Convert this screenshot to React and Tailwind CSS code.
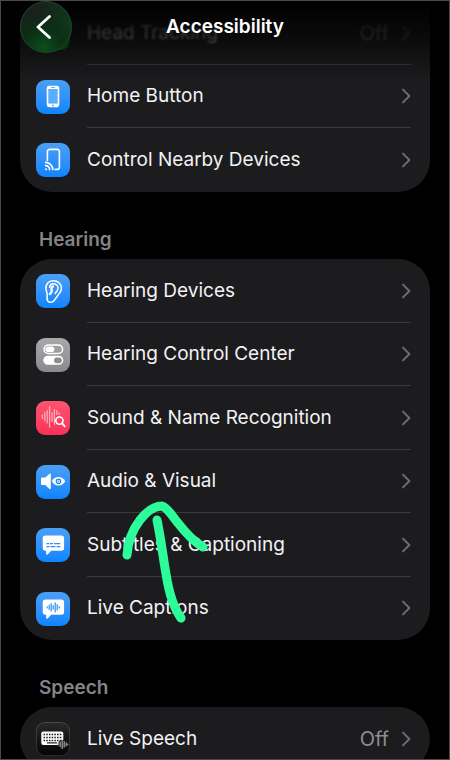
import React from 'react';

const HomeButtonIcon = () => (
  <svg viewBox="0 0 34 34" className="w-full h-full" aria-hidden="true">
    <rect x="10.7" y="5.8" width="12.6" height="21.4" rx="2.4" fill="#fff" />
    <rect x="12.3" y="9" width="9.4" height="14.6" fill="#5aaefb" />
    <rect x="15" y="7" width="4" height="1" rx="0.5" fill="#5aaefb" />
    <circle cx="17" cy="25.4" r="1" fill="#5aaefb" />
  </svg>
);

const NearbyIcon = () => (
  <svg viewBox="0 0 34 34" className="w-full h-full" fill="none" stroke="#fff" strokeWidth="1.6" strokeLinecap="round" aria-hidden="true">
    <path d="M11.4 17.5V8.6a2.2 2.2 0 0 1 2.2-2.2h7.6a2.2 2.2 0 0 1 2.2 2.2v15.6a2.2 2.2 0 0 1-2.2 2.2h-2" />
    <path d="M9.6 19.4a7.4 7.4 0 0 1 7.2 7.2M9.6 22.6a4 4 0 0 1 4 4" />
    <circle cx="10" cy="26.2" r="1" fill="#fff" stroke="none" />
  </svg>
);

const EarIcon = () => (
  <svg viewBox="0 0 34 34" className="w-full h-full" fill="none" stroke="#fff" strokeLinecap="round" strokeLinejoin="round" aria-hidden="true">
    <path strokeWidth="1.5" d="M10 15.5C9.4 10 12.6 6.8 17.2 6.8c4.9 0 8.2 3.2 8.2 7.4 0 3-1.6 4.8-3.6 7.2-1.7 2-2.2 3.5-3.8 5.3-1.5 1.6-4.2 2-5.9.6-1.5-1.3-1.2-3.1-.9-5.1.4-2.5-.6-4-1.2-6.7z" />
    <path strokeWidth="1.5" d="M13.6 13.2c.2-2.200 1.800-3.400 3.700-3.400 2.800 0 4.800 1.800 4.800 4.300 0 2.200-1.400 3.800-2.900 5.300" />
    <path strokeWidth="2.4" d="M17 12.400c-1.600.5-1.700 2-1.400 3.400.4 2-.2 3.100-1.700 4.200" />
  </svg>
);

const TogglesIcon = () => (
  <svg viewBox="0 0 34 34" className="w-full h-full" aria-hidden="true">
    <rect x="8" y="7" width="18.6" height="8.6" rx="4.3" fill="none" stroke="#fff" strokeWidth="1.5" />
    <rect x="9.4" y="8.5" width="9" height="5.6" rx="2.8" fill="#fff" />
    <rect x="7.3" y="17.8" width="20" height="9" rx="4.5" fill="#fff" />
    <rect x="18" y="19.4" width="7.8" height="5.8" rx="2.9" fill="#8d8d8f" />
  </svg>
);

const SoundIcon = () => (
  <svg viewBox="0 0 34 34" className="w-full h-full" fill="none" strokeLinecap="round" aria-hidden="true">
    <path stroke="#ffb3c1" strokeWidth="1.2" d="M6.4 14v3.6M8.8 11.5v8.5M11.2 9.5v12.5M13.6 5.8v20.4M16 11.5v9M18.4 8.5v15M20.8 9.5v4M23.2 12v1.5" />
    <circle cx="23.4" cy="19.6" r="3.6" stroke="#fff" strokeWidth="1.6" />
    <path stroke="#fff" strokeWidth="1.9" d="M26.2 22.4l2.6 3" />
  </svg>
);

const AudioVisualIcon = () => (
  <svg viewBox="0 0 34 34" className="w-full h-full" aria-hidden="true">
    <path fill="#fff" d="M6 12.5h3.3l4.2-3.8c.6-.5 1.3-.2 1.3.6v14c0 .8-.7 1.1-1.3.6l-4.2-3.8H6a1 1 0 0 1-1-1v-5.6a1 1 0 0 1 1-1z" />
    <path fill="#fff" d="M15.8 16.3c1.5-2.8 3.9-4.2 6.7-4.2s5.2 1.4 6.7 4.2c-1.5 2.8-3.9 4.2-6.7 4.2s-5.2-1.4-6.700-4.200z" />
    <circle cx="22.5" cy="16.3" r="2.2" fill="#fff" stroke="#1688f6" strokeWidth="1.2" />
    <circle cx="22.5" cy="16.3" r="0.8" fill="#1688f6" />
  </svg>
);

const bubblePath = 'M9.4 7.6h16a2.7 2.7 0 0 1 2.7 2.7v9.8a2.7 2.7 0 0 1-2.7 2.7H15.2l-3.6 3.7c-.6.6-1.4.3-1.4-.5v-3.2h-.8a2.7 2.7 0 0 1-2.7-2.7v-9.8a2.7 2.7 0 0 1 2.7-2.7z';

const SubtitlesIcon = () => (
  <svg viewBox="0 0 34 34" className="w-full h-full" aria-hidden="true">
    <path fill="#fff" d={bubblePath} />
    <path stroke="#2b8ff5" strokeWidth="1.2" d="M10.5 15.7h2.5M13.8 15.7h3.5M18.2 15.7h6M10.5 18.6h3M14.5 18.6h5M20.5 18.6h3.7" />
  </svg>
);

const LiveCaptionsIcon = () => (
  <svg viewBox="0 0 34 34" className="w-full h-full" aria-hidden="true">
    <path fill="#fff" d={bubblePath} />
    <path stroke="#2b8ff5" strokeWidth="1.2" strokeLinecap="round" d="M11.2 14.8v1M13.2 13v4.5M15.2 11.5v7.5M17.2 13.5v3.5M19.2 10.8v9M21.2 12.5v5.5M23.2 14.5v1.5" />
  </svg>
);

const LiveSpeechIcon = () => (
  <svg viewBox="0 0 34 34" className="w-full h-full" aria-hidden="true">
    <rect x="5.3" y="9.5" width="22" height="13.5" rx="2" fill="#fff" />
    <path stroke="#222" strokeWidth="1.5" strokeDasharray="1.6 1.1" d="M7.5 12.6h18M7.5 15.6h18M7.5 18.4h18" />
    <path stroke="#222" strokeWidth="1.2" d="M11 20.9h10" />
    <circle cx="26.5" cy="22.3" r="4.4" fill="#111" />
    <path stroke="#a5a5a7" strokeWidth="1.2" strokeLinecap="round" d="M22.2 21.5v1.5M24.2 20v4.5M26.2 18v8.5M28.2 19.5v5.5M30.2 20.8v3M31.8 22v.6" />
  </svg>
);

const ChevronRight = () => (
  <svg viewBox="0 0 10 16" className="w-[10px] h-4 shrink-0" fill="none" stroke="#6c6c70" strokeWidth="2" strokeLinecap="round" strokeLinejoin="round" aria-hidden="true">
    <path d="M2 1.600l6.400 6.400L2 14.400" />
  </svg>
);

const BLUE = 'bg-linear-to-b from-[#4a9ff5] to-[#0a84ff]';

const sections = [
  {
    items: [
      { label: 'Head Tracking', value: 'Off', tile: 'bg-[#0d6a20]', faded: true },
      { label: 'Home Button', tile: BLUE, Icon: HomeButtonIcon },
      { label: 'Control Nearby Devices', tile: BLUE, Icon: NearbyIcon },
    ],
  },
  {
    title: 'Hearing',
    items: [
      { label: 'Hearing Devices', tile: BLUE, Icon: EarIcon },
      { label: 'Hearing Control Center', tile: 'bg-linear-to-b from-[#a9a9ab] to-[#8a8a8c]', Icon: TogglesIcon },
      { label: 'Sound & Name Recognition', tile: 'bg-linear-to-b from-[#fb5570] to-[#fb2f58]', Icon: SoundIcon },
      { label: 'Audio & Visual', tile: BLUE, Icon: AudioVisualIcon },
      { label: 'Subtitles & Captioning', tile: BLUE, Icon: SubtitlesIcon },
      { label: 'Live Captions', tile: BLUE, Icon: LiveCaptionsIcon },
    ],
  },
  {
    title: 'Speech',
    items: [
      { label: 'Live Speech', value: 'Off', tile: 'bg-linear-to-b from-[#2a2a2b] to-[#050505] ring-1 ring-inset ring-white/15', Icon: LiveSpeechIcon },
    ],
  },
];

const SettingsRow = ({ label, value, tile, Icon, faded }) => (
  <li className="group odd:h-16 even:h-[63px]">
    <button type="button" className="flex w-full h-full items-center pl-4 text-left">
      <span className={`w-[34px] h-[34px] shrink-0 rounded-[9px] overflow-hidden ${tile}`}>{Icon && <Icon />}</span>
      <span className="ml-[17px] mr-[19px] flex flex-1 h-full items-center border-b border-[#3a3a3c] group-last:border-transparent">
        <span className={`flex flex-1 items-center ${faded ? 'blur-[1px] opacity-60' : ''}`}>
          <span className="flex-1 whitespace-nowrap text-[#f2f2f4]">{label}</span>
          {value && <span className="mr-3 text-[20px] text-[#8e8e93]">{value}</span>}
          <ChevronRight />
        </span>
      </span>
    </button>
  </li>
);

const SettingsSection = ({ title, items }) => (
  <section>
    {title && (
      <h2 className="h-[67px] px-[19px] pt-[34px] font-semibold text-[#848488]">{title}</h2>
    )}
    <ul className={`overflow-hidden bg-[#1c1c1e] ${title ? 'rounded-[32px]' : 'rounded-b-[32px]'}`}>
      {items.map((item) => (
        <SettingsRow key={item.label} {...item} />
      ))}
    </ul>
  </section>
);

const NavBar = () => (
  <header className="absolute inset-x-0 top-0 h-20 bg-linear-to-b from-black via-black/65 via-45% to-transparent">
    <div className="grid grid-cols-[52px_1fr_52px] items-center px-[19px]">
      <button
        type="button"
        aria-label="Back"
        className="flex w-[52px] h-[52px] items-center justify-center rounded-full border border-[#1d4a28] bg-[radial-gradient(circle_at_45%_90%,#0b4f1c_0%,#0b2f15_35%,#10281700_65%),linear-gradient(100deg,#18211b_35%,#0d3d1a_100%)]"
      >
        <svg viewBox="0 0 24 24" className="w-6 h-6" fill="none" stroke="#fff" strokeWidth="2.8" strokeLinecap="round" strokeLinejoin="round" aria-hidden="true">
          <path d="M15.500 1.500L4 12l11.500 10.500" />
        </svg>
      </button>
      <h1 className="text-center font-semibold text-white">Accessibility</h1>
    </div>
  </header>
);

// hand-drawn marker pointing at "Audio & Visual"
const MarkerArrow = () => (
  <svg viewBox="0 0 90 130" className="pointer-events-none absolute left-[119px] top-[496px] w-[90px] h-[130px]" fill="none" stroke="#2dfc9a" strokeWidth="9" strokeLinecap="round" strokeLinejoin="round" aria-hidden="true">
    <path d="M7 58C8 44 13 32 20 23 27 14 34 9 42 9 48 11 52 19 58 26 65 35 74 45 83 50" />
    <path d="M37 23C41 42 43 60 46 77 49 96 53 110 61 121" />
  </svg>
);

export default function App() {
  return (
    <div className="relative h-screen overflow-hidden border border-[#4a4a4c] bg-black font-['Inter','Liberation_Sans',sans-serif] text-[19px] leading-7">
      <main className="px-[19px]">
        {sections.map((section, index) => (
          <SettingsSection key={index} {...section} />
        ))}
      </main>
      <NavBar />
      <MarkerArrow />
    </div>
  );
}
